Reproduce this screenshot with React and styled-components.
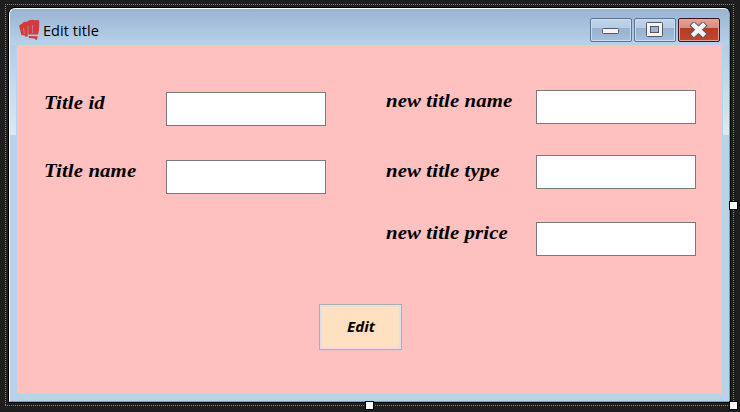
import React from "react";
import styled, { createGlobalStyle } from "styled-components";

const GlobalStyle = createGlobalStyle`
  * { box-sizing: border-box; }
  body { margin: 0; background: #1e1e1e; overflow: hidden; }
`;

const dots = (dir) => `repeating-linear-gradient(${dir}, #858585 0 1px, #1e1e1e 1px 2px)`;

const Designer = styled.main`
  position: relative;
  width: 740px;
  height: 412px;
  padding: 7px 0 0 8px;
  background:
    ${dots("to right")} 5px 4px / 729px 1px no-repeat,
    ${dots("to right")} 5px 405px / 729px 1px no-repeat,
    ${dots("to bottom")} 5px 4px / 1px 402px no-repeat,
    ${dots("to bottom")} 733px 4px / 1px 402px no-repeat,
    #1e1e1e;
`;

const Window = styled.section`
  width: 723px;
  height: 396px;
  border: 1px solid #000;
  border-radius: 7px 7px 0 0;
  background: #000;
`;

const Frame = styled.div`
  display: flex;
  flex-direction: column;
  height: 394px;
  padding: 0 7px 7px;
  border: 1px solid;
  border-color: #fff #37bed4 #37bed4 #fff;
  border-radius: 6px 6px 0 0;
  background:
    linear-gradient(#b4cce6, #dce8f5) 0 36px / 6px 90px no-repeat,
    linear-gradient(#b4cce6, #dce8f5) 713px 36px / 6px 90px no-repeat,
    linear-gradient(#99b4d1, #b9d1ea 36px, #b9d1ea);
`;

const TitleBar = styled.header`
  display: flex;
  flex: 0 0 36px;
  align-items: flex-start;
  padding-left: 2px;
`;

const FistIcon = styled.svg`
  width: 21px;
  height: 22px;
  margin-top: 10px;
`;

const Title = styled.h1`
  flex: 1;
  margin: 11px 0 0 3px;
  font: 400 14.5px/22px "Open Sans", sans-serif;
  letter-spacing: 0.05px;
  color: #000;
`;

const Controls = styled.div`
  display: flex;
  gap: 2px;
  margin: 9px 2px 0 0;
`;

const ControlButton = styled.button`
  display: flex;
  align-items: center;
  justify-content: center;
  width: 42px;
  height: 24px;
  padding: 0;
  border: 1px solid ${(p) => (p.$close ? "#43101d" : "#5f7491")};
  border-radius: 2px;
  box-shadow: inset 0 0 0 1px ${(p) => (p.$close ? "#e5a295" : "#c9dcf0")};
  background: ${(p) =>
    p.$close
      ? "linear-gradient(#e5a296, #d98b7e 9px, #b83b25 9px, #bd4830)"
      : "linear-gradient(#bfd3e9, #b7cde5 9px, #98b1cd 9px, #a4bfdc)"};
`;

const Client = styled.form`
  flex: 1;
  padding: 45px 26px 0 27px;
  background: #ffc0c0;
`;

const Columns = styled.div`
  display: flex;
  justify-content: space-between;
  height: 214px;
`;

const FieldGroup = styled.div`
  display: flex;
  flex-direction: column;
`;

const Field = styled.label`
  display: flex;
  align-items: flex-start;
  height: 34px;
  margin-top: ${(p) => p.$gap}px;
`;

const Caption = styled.span`
  width: ${(p) => p.$width}px;
  font: italic 700 18.5px/22px "Liberation Serif", serif;
  letter-spacing: 0.1px;
  transform: scaleX(1.125);
  transform-origin: 0 0;
  white-space: nowrap;
  color: #000;
  padding-top: ${(p) => p.$drop}px;
`;

const TextBox = styled.input`
  width: 160px;
  height: 34px;
  padding: 0 4px;
  border: 1px solid #7a7a7a;
  border-radius: 0;
  background: #fff;
`;

const EditButton = styled.button`
  display: block;
  width: 83px;
  height: 46px;
  margin: 0 0 0 275px;
  padding: 0;
  border: 1px solid #adadad;
  box-shadow: inset 0 0 0 2px #e1e1e1;
  background: #ffe0c0;
  font: italic 700 14px/44px "Noto Sans", sans-serif;
  color: #000;
`;

const EditLabel = styled.span`
  display: inline-block;
  transform: scaleX(1.08);
`;

const Handle = styled.i`
  position: absolute;
  left: ${(p) => p.$x}px;
  top: ${(p) => p.$y}px;
  width: 9px;
  height: 9px;
  border: 1px solid #000;
  background: #fff;
`;

const leftFields = [
  { text: "Title id", gap: 2, drop: 0 },
  { text: "Title name", gap: 34, drop: 0 },
];

const rightFields = [
  { text: "new title name", gap: 0, drop: 0 },
  { text: "new title type", gap: 31, drop: 5 },
  { text: "new title price", gap: 33, drop: 0 },
];

export default function App() {
  return (
    <Designer>
      <GlobalStyle />
      <Window>
        <Frame>
          <TitleBar>
            <FistIcon viewBox="0 0 21 22">
              <path
                fill="#d53a3a"
                d="M0 6.500 4 4l.6-1 4-.6L9.500 1.500l4-.7 1 .5L19.500 1l.8 1-.3 9-1 4.500H9l-.6 2H6l-.5-1.200H2.500Z"
              />
              <path fill="#d53a3a" d="m9.500 17 9.300.3-.8 3.500-2-.2-.3-1.200-5.700-.5Z" />
              <path
                fill="none"
                stroke="#b0a0b0"
                strokeWidth=".7"
                d="m4.500 9 .9 6M9 7v9M13.600 6v8"
              />
            </FistIcon>
            <Title>Edit title</Title>
            <Controls>
              <ControlButton type="button" aria-label="Minimize">
                <svg width="18" height="8" viewBox="0 0 18 8">
                  <rect x=".5" y="2.5" width="16" height="5" rx="1" fill="#f3f3f3" stroke="#535666" />
                </svg>
              </ControlButton>
              <ControlButton type="button" aria-label="Maximize">
                <svg width="18" height="16" viewBox="0 0 18 16">
                  <rect x=".5" y=".5" width="16" height="14" rx="1" fill="#f3f3f3" stroke="#535666" />
                  <rect x="4.5" y="4.5" width="8" height="6" fill="#9db5d0" stroke="#535666" />
                </svg>
              </ControlButton>
              <ControlButton type="button" aria-label="Close" $close>
                <svg width="18" height="16" viewBox="0 0 18 16">
                  <path d="m4 3.500 9 8.500M13 3.500 4 12" stroke="#535666" strokeWidth="6.5" strokeLinecap="square" />
                  <path d="m4 3.500 9 8.500M13 3.500 4 12" stroke="#f3f3f3" strokeWidth="4.5" strokeLinecap="square" />
                </svg>
              </ControlButton>
            </Controls>
          </TitleBar>
          <Client onSubmit={(e) => e.preventDefault()}>
            <Columns>
              <FieldGroup>
                {leftFields.map((f) => (
                  <Field key={f.text} $gap={f.gap}>
                    <Caption $width={122} $drop={f.drop}>{f.text}</Caption>
                    <TextBox />
                  </Field>
                ))}
              </FieldGroup>
              <FieldGroup>
                {rightFields.map((f) => (
                  <Field key={f.text} $gap={f.gap}>
                    <Caption $width={150} $drop={f.drop}>{f.text}</Caption>
                    <TextBox />
                  </Field>
                ))}
              </FieldGroup>
            </Columns>
            <EditButton><EditLabel>Edit</EditLabel></EditButton>
          </Client>
        </Frame>
      </Window>
      <Handle $x={729} $y={201} />
      <Handle $x={365} $y={401} />
      <Handle $x={729} $y={401} />
    </Designer>
  );
}
